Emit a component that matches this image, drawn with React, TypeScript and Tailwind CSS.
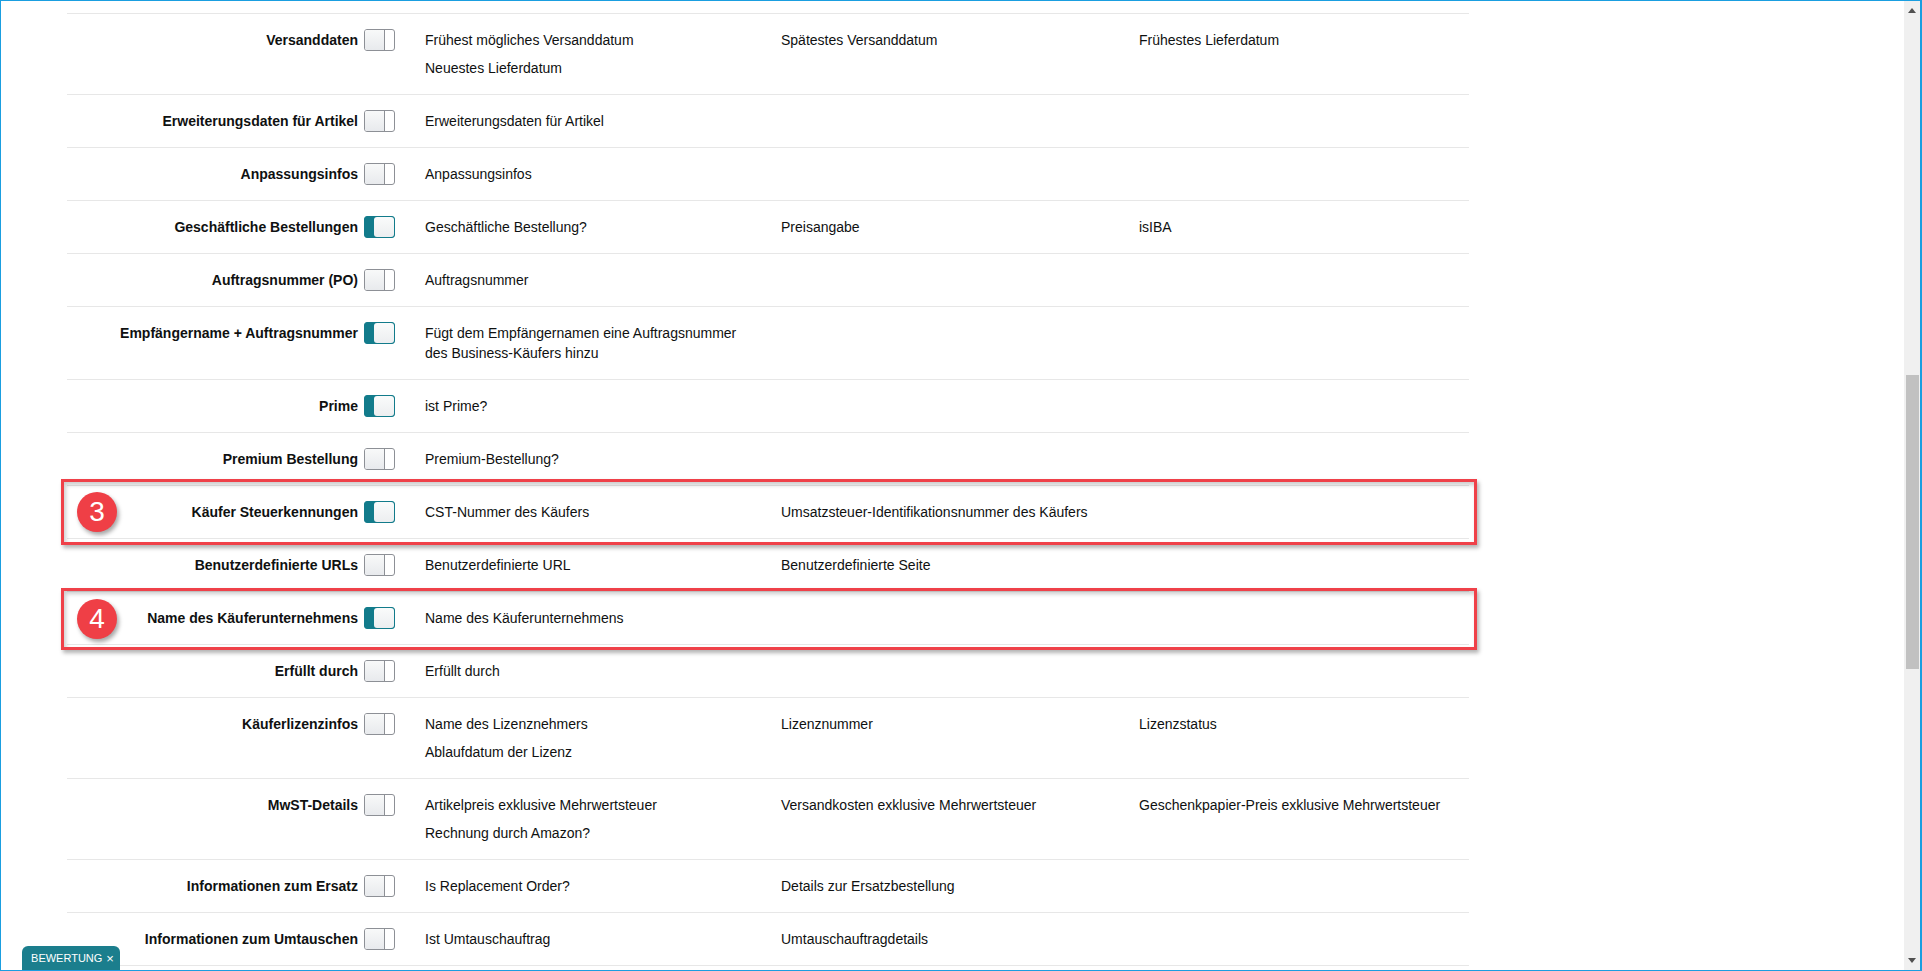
type Row = {
  label: string;
  on: boolean;
  items: React.ReactNode[];
};

const rows: Row[] = [
  {
    label: "Versanddaten",
    on: false,
    items: ["Frühest mögliches Versanddatum", "Spätestes Versanddatum", "Frühestes Lieferdatum", "Neuestes Lieferdatum"],
  },
  { label: "Erweiterungsdaten für Artikel", on: false, items: ["Erweiterungsdaten für Artikel"] },
  { label: "Anpassungsinfos", on: false, items: ["Anpassungsinfos"] },
  { label: "Geschäftliche Bestellungen", on: true, items: ["Geschäftliche Bestellung?", "Preisangabe", "isIBA"] },
  { label: "Auftragsnummer (PO)", on: false, items: ["Auftragsnummer"] },
  {
    label: "Empfängername + Auftragsnummer",
    on: true,
    items: [
      <>
        Fügt dem Empfängernamen eine Auftragsnummer
        <br />
        des Business-Käufers hinzu
      </>,
    ],
  },
  { label: "Prime", on: true, items: ["ist Prime?"] },
  { label: "Premium Bestellung", on: false, items: ["Premium-Bestellung?"] },
  {
    label: "Käufer Steuerkennungen",
    on: true,
    items: ["CST-Nummer des Käufers", "Umsatzsteuer-Identifikationsnummer des Käufers"],
  },
  { label: "Benutzerdefinierte URLs", on: false, items: ["Benutzerdefinierte URL", "Benutzerdefinierte Seite"] },
  { label: "Name des Käuferunternehmens", on: true, items: ["Name des Käuferunternehmens"] },
  { label: "Erfüllt durch", on: false, items: ["Erfüllt durch"] },
  {
    label: "Käuferlizenzinfos",
    on: false,
    items: ["Name des Lizenznehmers", "Lizenznummer", "Lizenzstatus", "Ablaufdatum der Lizenz"],
  },
  {
    label: "MwST-Details",
    on: false,
    items: [
      "Artikelpreis exklusive Mehrwertsteuer",
      "Versandkosten exklusive Mehrwertsteuer",
      "Geschenkpapier-Preis exklusive Mehrwertsteuer",
      "Rechnung durch Amazon?",
    ],
  },
  { label: "Informationen zum Ersatz", on: false, items: ["Is Replacement Order?", "Details zur Ersatzbestellung"] },
  { label: "Informationen zum Umtauschen", on: false, items: ["Ist Umtauschauftrag", "Umtauschauftragdetails"] },
];

function Toggle({ on }: { on: boolean }) {
  if (on) {
    return (
      <div className="-my-px flex h-[22px] w-[31px] shrink-0 justify-end rounded-[3px] border border-[#127b8b] bg-[#127b8b]">
        <div className="w-[20px] rounded-[3px] bg-gradient-to-b from-[#fafbfb] to-[#eceef0]" />
      </div>
    );
  }
  return (
    <div className="-my-px flex h-[22px] w-[31px] shrink-0 overflow-hidden rounded-[3px] border border-[#8d9096] bg-white">
      <div className="w-[20px] border-r border-[#8d9096] bg-gradient-to-b from-[#f8f9f9] to-[#e8eaed]" />
    </div>
  );
}

function SettingRow({ row }: { row: Row }) {
  return (
    <div className="flex border-t border-[#e7e7e7] py-4">
      <div className="flex h-5 w-[328px] shrink-0 items-center justify-end gap-[6px]">
        <span className="text-right font-bold leading-5">{row.label}</span>
        <Toggle on={row.on} />
      </div>
      <div className="ml-[30px] grid grid-cols-[356px_358px_330px] gap-y-2 leading-5">
        {row.items.map((item, i) => (
          <div key={i}>{item}</div>
        ))}
      </div>
    </div>
  );
}

function Marker({ n, top }: { n: number; top: number }) {
  return (
    <div
      className="absolute left-[76px] flex h-[40px] w-[40px] items-center justify-center rounded-full bg-[#ef3f46] text-[28px] leading-none text-white shadow-[2px_3px_4px_rgba(0,0,0,0.35)]"
      style={{ top }}
    >
      {n}
    </div>
  );
}

export default function App() {
  return (
    <div
      className="relative flex h-[971px] w-full overflow-hidden border border-r-2 border-[#1a9ee0] bg-white text-[14px] text-[#0f1111]"
      style={{ fontFamily: '"Liberation Sans", Arial, sans-serif' }}
    >
      <div className="flex-1 overflow-hidden">
        <div className="ml-[66px] w-[1402px] pt-[12px]">
          {rows.map((row) => (
            <SettingRow key={row.label} row={row} />
          ))}
          <div className="h-[40px] border-t border-[#e7e7e7]" />
        </div>
      </div>

      {/* scrollbar */}
      <div className="flex w-[16px] shrink-0 flex-col items-center bg-[#f0f0f0]">
        <div className="mt-[7px] h-0 w-0 border-x-[4px] border-b-[5px] border-x-transparent border-b-[#505050]" />
        <div className="mt-[362px] h-[294px] w-[13px] bg-[#c1c1c1]" />
        <div className="flex-1" />
        <div className="mb-[7px] h-0 w-0 border-x-[4px] border-t-[5px] border-x-transparent border-t-[#505050]" />
      </div>

      {/* annotation boxes */}
      <div className="absolute left-[60px] top-[478px] h-[66px] w-[1416px] border-[3px] border-[#ef4149] shadow-[2px_3px_4px_rgba(0,0,0,0.3),inset_2px_3px_4px_rgba(0,0,0,0.2)]" />
      <div className="absolute left-[60px] top-[587px] h-[62px] w-[1416px] border-[3px] border-[#ef4149] shadow-[2px_3px_4px_rgba(0,0,0,0.3),inset_2px_3px_4px_rgba(0,0,0,0.2)]" />
      <Marker n={3} top={491} />
      <Marker n={4} top={598} />

      {/* feedback tab */}
      <div className="absolute bottom-0 left-[21px] flex h-[24px] w-[98px] items-center justify-center gap-[4px] rounded-t-[6px] bg-[#1b7e8d] pl-[3px] text-[11px] text-white">
        <span>BEWERTUNG</span>
        <span className="text-[13px] leading-none">×</span>
      </div>
    </div>
  );
}
